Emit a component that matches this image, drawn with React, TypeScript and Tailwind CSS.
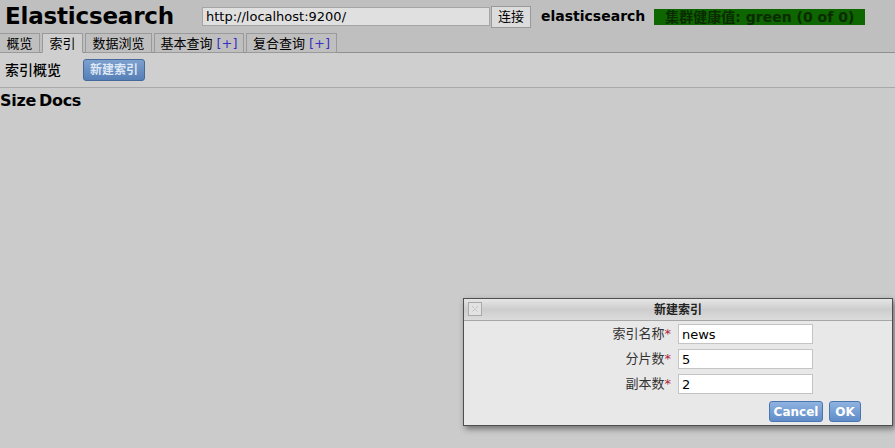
import React, { useState } from 'react';

const font = "font-['DejaVu_Sans','Noto_Sans_CJK_SC',sans-serif]";

const tabs = [
  { label: '概览', w: 'w-[40px] border-l-0' },
  { label: '索引', w: 'w-[41px]', active: true },
  { label: '数据浏览', w: 'w-[67px]' },
  { label: '基本查询', w: 'w-[90px]', plus: true },
  { label: '复合查询', w: 'w-[91px]', plus: true },
];

const App: React.FC = () => {
  const [name, setName] = useState('news');
  const [shards, setShards] = useState('5');
  const [replicas, setReplicas] = useState('2');

  const fields = [
    { label: '索引名称', value: name, set: setName },
    { label: '分片数', value: shards, set: setShards },
    { label: '副本数', value: replicas, set: setReplicas },
  ];

  return (
    <div className={`${font} h-[448px] w-[895px] overflow-hidden bg-[#cbcbcb] text-black flex flex-col relative`}>
      {/* header */}
      <div className="bg-[#bfbfbf] border-b border-[#8f8f8f]">
        <div className="flex items-center h-[33px] pl-[5px]">
          <span className="text-[23px] font-bold leading-none tracking-[-0.2px] w-[197px]">Elasticsearch</span>
          <input
            className="h-[19px] w-[288px] bg-[#e0e0e0] border border-[#a5a5a5] px-[3px] text-[13px] text-black outline-none"
            defaultValue="http://localhost:9200/"
          />
          <button className="h-[22px] w-[40px] bg-[#dcdcdc] border border-[#999] text-[13px] ml-[1px]">连接</button>
          <span className="ml-[10px] text-[14px] font-bold">elasticsearch</span>
          <span className="ml-[9px] h-[16px] w-[211px] bg-[#0d6600] text-[#0a2c00] text-[14px] font-bold leading-[16px] pl-[11px]">
            集群健康值: green (0 of 0)
          </span>
        </div>
        <div className="flex items-end h-[20px] gap-[2px] -mb-px">
          {tabs.map((t) => (
            <div
              key={t.label}
              className={`h-[20px] ${t.w} text-center text-[13px] leading-[19px] border border-[#9a9a9a] ${
                t.active ? 'bg-[#cfcfcf] border-b-[#cfcfcf]' : 'bg-[#bfbfbf]'
              }`}
            >
              {t.label}
              {t.plus && <span className="text-[#3a2fc0] ml-[4px]">[+]</span>}
            </div>
          ))}
        </div>
      </div>

      {/* toolbar */}
      <div className="h-[35px] bg-[#cfcfcf] border-b border-[#a9a9a9] flex items-center pl-[5px]">
        <span className="text-[14px] font-medium w-[78px]">索引概览</span>
        <button className="h-[22px] w-[62px] rounded-[3px] border border-[#44699a] bg-gradient-to-b from-[#7da0cf] to-[#557fb7] text-[#dfe8f5] text-[12px] font-bold">
          新建索引
        </button>
      </div>

      <div className="text-[16px] font-bold leading-[20px] mt-[3px] tracking-[-0.3px]">
        Size<span className="ml-[3px]">Docs</span>
      </div>

      {/* dialog */}
      <div className="absolute left-[463px] top-[298px] w-[430px] h-[128px] border border-[#4f4f4f] bg-[#e8e8e8] shadow-[2px_3px_6px_rgba(0,0,0,0.45)] flex flex-col">
        <div className="h-[22px] border-b border-[#a6a6a6] bg-gradient-to-b from-[#e6e6e6] via-[#cdcdcd] to-[#dcdcdc] flex items-center relative">
          <div className="absolute left-[4px] top-[3px] w-[14px] h-[14px] border border-[#aaa] bg-[#e2e2e2] flex items-center justify-center">
            <svg width="10" height="10" viewBox="0 0 10 10">
              <path d="M2 2 L8 8 M8 2 L2 8" stroke="#b5b5b5" strokeWidth="1" strokeDasharray="1 1" />
            </svg>
          </div>
          <span className="w-full text-center text-[12px] font-bold text-[#222]">新建索引</span>
        </div>
        <div className="flex flex-col gap-[5px] pt-[3px]">
          {fields.map((f) => (
            <div key={f.label} className="flex items-center">
              <span className="w-[207px] text-right text-[13px] text-[#333]">
                {f.label}
                <span className="text-[#b0253a]">*</span>
              </span>
              <input
                className="ml-[7px] h-[20px] w-[135px] bg-white border border-[#c4c4c4] px-[3px] text-[13px] text-black outline-none"
                value={f.value}
                onChange={(e) => f.set(e.target.value)}
              />
            </div>
          ))}
        </div>
        <div className="flex justify-end gap-[6px] pr-[31px] mt-[7px]">
          <button className="h-[21px] w-[54px] rounded-[3px] border border-[#4a76b0] bg-gradient-to-b from-[#8fb2e0] to-[#5f8cc8] text-white text-[12px] font-bold">
            Cancel
          </button>
          <button className="h-[21px] w-[32px] rounded-[3px] border border-[#4a76b0] bg-gradient-to-b from-[#8fb2e0] to-[#5f8cc8] text-white text-[12px] font-bold">
            OK
          </button>
        </div>
      </div>
    </div>
  );
};

export default App;
